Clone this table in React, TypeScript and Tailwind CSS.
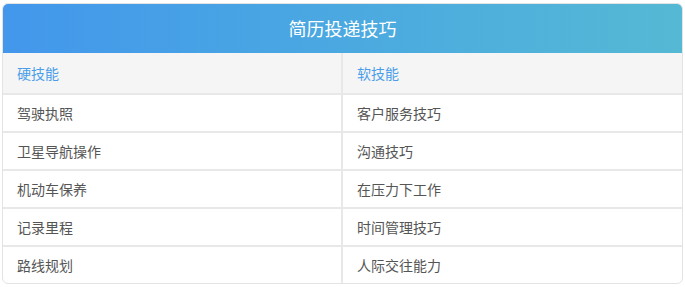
const rows = [
  ['驾驶执照', '客户服务技巧'],
  ['卫星导航操作', '沟通技巧'],
  ['机动车保养', '在压力下工作'],
  ['记录里程', '时间管理技巧'],
  ['路线规划', '人际交往能力'],
];

export default function App() {
  return (
    <div className="w-[685px] h-[287px] bg-white pt-[3px] px-[2px] font-['Noto_Sans_CJK_SC','Noto_Sans',sans-serif]">
      <div className="w-[681px] rounded-[6px] border border-[#e3e3e3] overflow-hidden">
        {/* Title */}
        <div className="h-[50px] -mx-px -mt-px bg-gradient-to-r from-[#4397ec] to-[#55b9d4] flex items-center justify-center text-white text-[18px]">
          简历投递技巧
        </div>

        {/* Table head */}
        <div className="grid grid-cols-[338px_1fr] h-[40px] bg-[#f5f5f5] text-[14px] text-[#4a9ee9]">
          <div className="flex items-center pl-[14px]">硬技能</div>
          <div className="flex items-center pl-[14px] border-l-2 border-[#e8e8e8]">软技能</div>
        </div>

        {/* Body rows */}
        {rows.map(([hard, soft]) => (
          <div key={hard} className="grid grid-cols-[338px_1fr] h-[38px] border-t-2 border-[#e8e8e8] text-[14px] text-[#555]">
            <div className="flex items-center pl-[14px]">{hard}</div>
            <div className="flex items-center pl-[14px] border-l-2 border-[#e8e8e8]">{soft}</div>
          </div>
        ))}
      </div>
    </div>
  );
}
